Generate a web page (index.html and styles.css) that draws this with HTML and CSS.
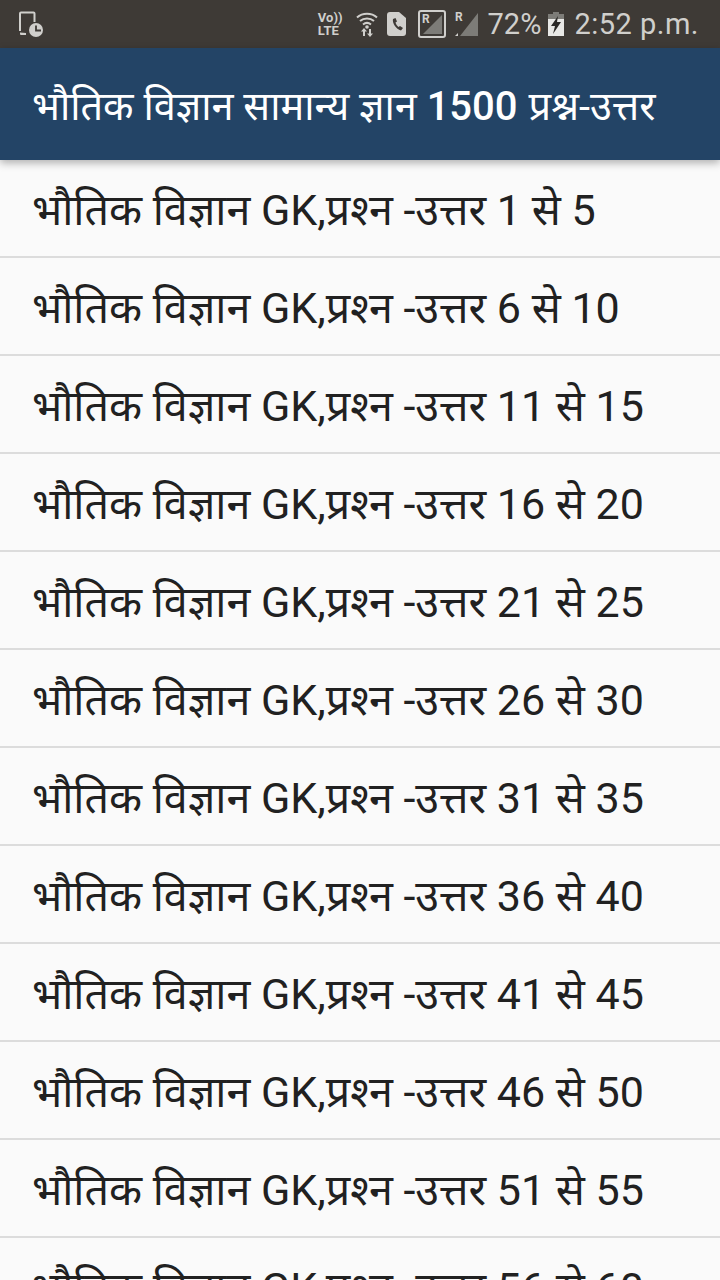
FILE: index.html
```html
<!DOCTYPE html>
<html lang="hi">
  <head>
    <meta charset="UTF-8" />
    <meta name="viewport" content="width=device-width, initial-scale=1.0" />
    <title>भौतिक विज्ञान सामान्य ज्ञान 1500 प्रश्न-उत्तर</title>
    <link rel="stylesheet" href="styles.css">
  </head>
  <body>
    <div class="status-bar">
      <svg class="icon-left" width="28" height="28" viewBox="0 0 28 28">
        <path d="M3 21V3.500a1 1 0 0 1 1-1h12.500a1 1 0 0 1 1 1V12" fill="none" stroke="#d0cfcc" stroke-width="2"/>
        <path d="M3 22.500V24a1 1 0 0 0 1 1h5v-2z" fill="#d0cfcc"/>
        <circle cx="19" cy="20" r="7" fill="#d0cfcc"/>
        <path d="M19 15.500V20.500H24" fill="none" stroke="#3e3a36" stroke-width="1.800"/>
      </svg>
      <div class="status-right">
        <div class="volte"><span>Vo))</span><span>LTE</span></div>
        <svg class="icon-wifi" width="22" height="26" viewBox="0 0 22 26">
          <path d="M1 6.500C6.500 1.500 15.500 1.500 21 6.500M4 10C8 6.500 14 6.500 18 10M7 13.500C9.500 11.500 12.500 11.500 15 13.500" fill="none" stroke="#d0cfcc" stroke-width="2"/>
          <circle cx="11" cy="16" r="1.800" fill="#d0cfcc"/>
          <path d="M7 25V20.500H5L8 17L11 20.500H9V25ZM13 18V22.500H11L14 26L17 22.500H15V18Z" fill="#d0cfcc"/>
        </svg>
        <svg class="icon-sim" width="19" height="24" viewBox="0 0 19 24">
          <path d="M3 0H12L19 6V21a3 3 0 0 1-3 3H3a3 3 0 0 1-3-3V3a3 3 0 0 1 3-3Z" fill="#d0cfcc"/>
          <path d="M6 7C5 11 9 17 14 18.500L16 16L13 14L11.500 15C10 14 9 12 8.500 10.500L10 9.500L8.500 6Z" fill="#3e3a36"/>
        </svg>
        <svg class="icon-box" width="28" height="28" viewBox="0 0 28 28">
          <rect x="1" y="1" width="26" height="26" rx="2" fill="none" stroke="#d0cfcc" stroke-width="2"/>
          <path d="M24 5V24H5Z" fill="#7d7c78"/>
          <text x="4" y="13" class="sig-r">R</text>
        </svg>
        <svg class="icon-signal" width="24" height="28" viewBox="0 0 24 28">
          <path d="M23 3V26H5Z" fill="#7d7c78"/>
          <path d="M0 26L3 23V26Z" fill="#d0cfcc"/>
          <text x="0" y="11" class="sig-r">R</text>
        </svg>
        <span class="battery-pct">72%</span>
        <svg class="icon-battery" width="16" height="24" viewBox="0 0 16 24">
          <path d="M5 0H11V2H16V24H0V2H5Z" fill="#7d7c78"/>
          <path d="M0 7H16V24H0Z" fill="#e8e8e6"/>
          <path d="M10 4L3 14H7L5 22L13 10H9Z" fill="#2a2826"/>
        </svg>
        <span class="clock">2:52 p.m.</span>
      </div>
    </div>

    <header class="app-bar">
      <h1>भौतिक विज्ञान सामान्य ज्ञान <span class="num">1500</span> प्रश्न-उत्तर</h1>
    </header>

    <ul class="list">
      <li>भौतिक विज्ञान GK,प्रश्‍न -उत्तर 1 से 5</li>
      <li>भौतिक विज्ञान GK,प्रश्‍न -उत्तर 6 से 10</li>
      <li>भौतिक विज्ञान GK,प्रश्‍न -उत्तर 11 से 15</li>
      <li>भौतिक विज्ञान GK,प्रश्‍न -उत्तर 16 से 20</li>
      <li>भौतिक विज्ञान GK,प्रश्‍न -उत्तर 21 से 25</li>
      <li>भौतिक विज्ञान GK,प्रश्‍न -उत्तर 26 से 30</li>
      <li>भौतिक विज्ञान GK,प्रश्‍न -उत्तर 31 से 35</li>
      <li>भौतिक विज्ञान GK,प्रश्‍न -उत्तर 36 से 40</li>
      <li>भौतिक विज्ञान GK,प्रश्‍न -उत्तर 41 से 45</li>
      <li>भौतिक विज्ञान GK,प्रश्‍न -उत्तर 46 से 50</li>
      <li>भौतिक विज्ञान GK,प्रश्‍न -उत्तर 51 से 55</li>
      <li>भौतिक विज्ञान GK,प्रश्‍न -उत्तर 56 से 60</li>
    </ul>
  </body>
</html>
```

FILE: styles.css
```css
html,
body {
  margin: 0;
  padding: 0;
  height: 1280px;
  overflow: hidden;
}
body {
  font-family: Roboto, "Noto Sans", "Noto Sans Devanagari", sans-serif;
  background-color: #fafafa;
}

.status-bar {
  height: 48px;
  background-color: #3e3a36;
  color: #d0cfcc;
  display: flex;
  justify-content: space-between;
  align-items: center;
  padding: 0 21px 0 17px;
}
.status-right {
  display: flex;
  align-items: center;
}
.volte {
  display: flex;
  flex-direction: column;
  font-size: 13px;
  font-weight: 700;
  line-height: 13px;
  margin-right: 13px;
}
.icon-wifi {
  margin-right: 9px;
}
.icon-sim {
  margin-right: 12px;
}
.icon-box {
  margin-right: 9px;
}
.icon-signal {
  margin-right: 9px;
}
.sig-r {
  font-size: 12px;
  font-weight: 700;
  fill: #d0cfcc;
}
.battery-pct {
  font-size: 29px;
  margin-right: 7px;
}
.icon-battery {
  margin-right: 10px;
}
.clock {
  font-size: 29px;
  letter-spacing: 0.5px;
}

.app-bar {
  height: 112px;
  box-sizing: border-box;
  background-color: #234466;
  display: flex;
  align-items: center;
  padding: 2px 32px 0;
  box-shadow: 0 3px 8px rgba(0, 0, 0, 0.3);
  position: relative;
}
.app-bar h1 {
  margin: 0;
  color: #ffffff;
  font-size: 39.7px;
  font-weight: 400;
  white-space: nowrap;
}
.app-bar .num {
  font-size: 40px;
  font-weight: 500;
  margin-right: 1px;
}

.list {
  list-style: none;
  margin: 0;
  padding: 0;
}
.list li {
  height: 96px;
  line-height: 100px;
  padding-left: 32px;
  font-size: 43px;
  color: #212121;
  border-bottom: 2px solid #dcdcdc;
  white-space: nowrap;
}
```
